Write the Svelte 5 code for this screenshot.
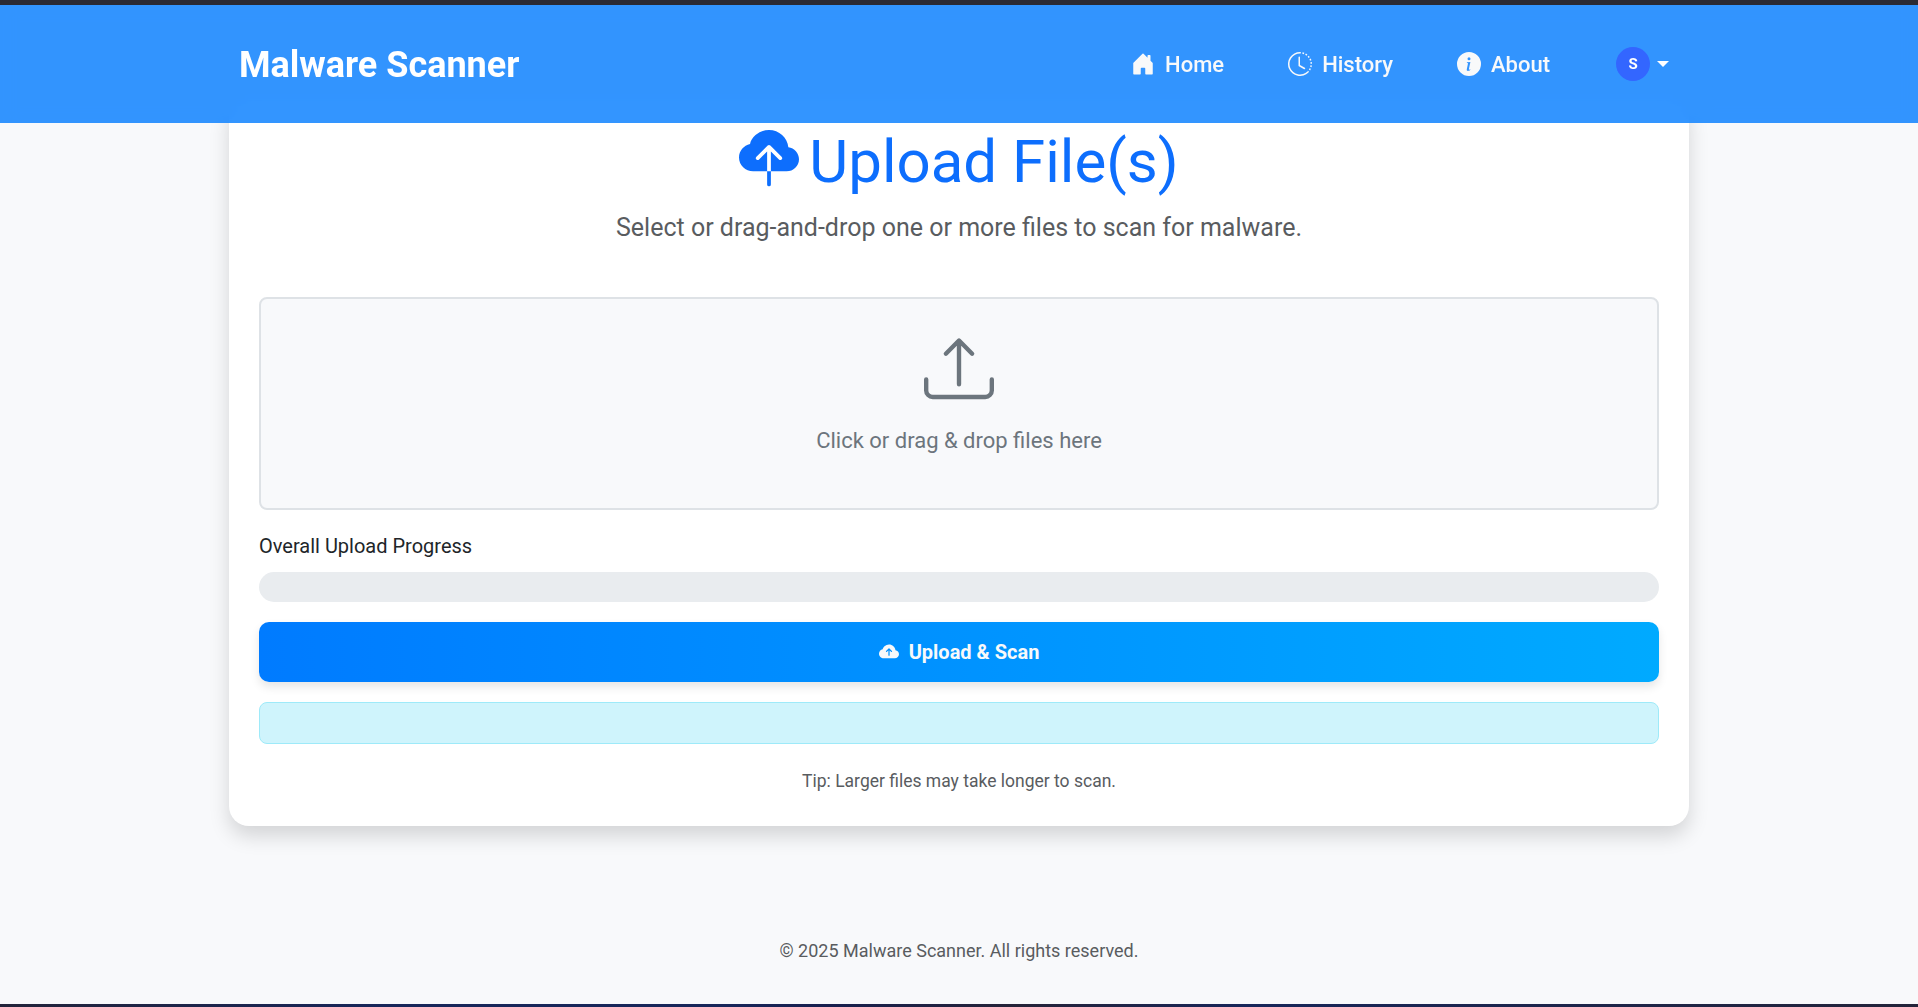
<script>
  const nav = [
    {
      label: 'Home',
      paths: ['M6.5 14.5v-3.505c0-.245.25-.495.5-.495h2c.25 0 .5.25.5.5v3.5a.5.5 0 0 0 .5.5h4a.5.5 0 0 0 .5-.5v-7a.5.5 0 0 0-.146-.354L13 5.793V2.5a.5.5 0 0 0-.5-.5h-1a.5.5 0 0 0-.5.5v1.293L8.354 1.146a.5.5 0 0 0-.708 0l-6 6A.5.5 0 0 0 1.5 7.5v7a.5.5 0 0 0 .5.5h4a.5.5 0 0 0 .5-.5']
    },
    {
      label: 'History',
      paths: [
        'M8.515 1.019A7 7 0 0 0 8 1V0a8 8 0 0 1 .589.022zm2.004.45a7 7 0 0 0-.985-.299l.219-.976q.576.129 1.126.342zm1.37.71a7 7 0 0 0-.439-.27l.493-.87a8 8 0 0 1 .979.654l-.615.789a7 7 0 0 0-.418-.302zm1.834 1.79a7 7 0 0 0-.653-.796l.724-.69q.406.429.747.91zm.744 1.352a7 7 0 0 0-.214-.468l.893-.45a8 8 0 0 1 .45 1.088l-.95.313a7 7 0 0 0-.179-.483m.53 2.507a7 7 0 0 0-.1-1.025l.985-.17q.1.58.116 1.17zm-.131 1.538q.05-.254.081-.51l.993.123a8 8 0 0 1-.23 1.155l-.964-.267q.069-.247.12-.501m-.952 2.379q.276-.436.486-.908l.914.405q-.24.54-.555 1.038zm-.964 1.205q.183-.183.35-.378l.758.653a8 8 0 0 1-.401.432z',
        'M8 1a7 7 0 1 0 4.95 11.95l.707.707A8.001 8.001 0 1 1 8 0z',
        'M7.5 3a.5.5 0 0 1 .5.5v5.21l3.248 1.856a.5.5 0 0 1-.496.868l-3.5-2A.5.5 0 0 1 7 9V3.5a.5.5 0 0 1 .5-.5'
      ]
    },
    {
      label: 'About',
      paths: ['M8 16A8 8 0 1 0 8 0a8 8 0 0 0 0 16m.93-9.412-1 4.705c-.07.34.029.533.304.533.194 0 .487-.07.686-.246l-.088.416c-.287.346-.92.598-1.465.598-.703 0-1.002-.422-.808-1.319l.738-3.468c.064-.293.006-.399-.287-.47l-.451-.081.082-.381 2.29-.287zM8 5.5a1 1 0 1 1 0-2 1 1 0 0 1 0 2']
    }
  ];
</script>

<div class="page">
  <div class="edge top"></div>
  <header>
    <div class="bar">
      <a class="brand" href="#home">Malware Scanner</a>
      <nav>
        {#each nav as item}
          <a class="link" href="#{item.label.toLowerCase()}">
            <svg class="icon" viewBox="0 0 16 16">
              {#each item.paths as d}<path {d} />{/each}
            </svg>
            <span>{item.label}</span>
          </a>
        {/each}
        <button class="account" aria-label="Account menu">
          <span class="avatar">S</span>
          <span class="caret"></span>
        </button>
      </nav>
    </div>
  </header>

  <main>
    <h1>
      <svg class="icon" viewBox="0 0 16 16"><path d="M8 0a5.53 5.53 0 0 0-3.594 1.342c-.766.66-1.321 1.52-1.464 2.383C1.266 4.095 0 5.555 0 7.318 0 9.366 1.708 11 3.781 11H7.5V5.707L5.354 7.854a.5.5 0 1 1-.708-.708l3-3a.5.5 0 0 1 .708 0l3 3a.5.5 0 0 1-.708.708L8.5 5.707V11h4.188C14.502 11 16 9.57 16 7.773c0-1.636-1.242-2.969-2.834-3.194C12.923 1.999 10.69 0 8 0m-.5 14.5V11h1v3.5a.5.5 0 0 1-1 0" /></svg>
      <span>Upload File(s)</span>
    </h1>
    <p class="lead">Select or drag-and-drop one or more files to scan for malware.</p>

    <div class="drop">
      <svg class="icon" viewBox="0 0 16 16">
        <path d="M.5 9.9a.5.5 0 0 1 .5.5v2.5a1 1 0 0 0 1 1h12a1 1 0 0 0 1-1v-2.5a.5.5 0 0 1 1 0v2.5a2 2 0 0 1-2 2H2a2 2 0 0 1-2-2v-2.5a.5.5 0 0 1 .5-.5" />
        <path d="M7.646 1.146a.5.5 0 0 1 .708 0l3 3a.5.5 0 0 1-.708.708L8.5 2.707V11.5a.5.5 0 0 1-1 0V2.707L5.354 4.854a.5.5 0 1 1-.708-.708z" />
      </svg>
      <p>Click or drag &amp; drop files here</p>
    </div>

    <div class="label">Overall Upload Progress</div>
    <div class="progress"></div>
    <button class="submit">
      <svg class="icon" viewBox="0 0 16 16"><path d="M8 2a5.53 5.53 0 0 0-3.594 1.342c-.766.66-1.321 1.52-1.464 2.383C1.266 6.095 0 7.555 0 9.318 0 11.366 1.708 13 3.781 13h8.906C14.502 13 16 11.57 16 9.773c0-1.636-1.242-2.969-2.834-3.194C12.923 3.999 10.69 2 8 2m2.354 5.146a.5.5 0 0 1-.708.708L8.5 6.707V10.5a.5.5 0 0 1-1 0V6.707L6.354 7.854a.5.5 0 1 1-.708-.708l2-2a.5.5 0 0 1 .708 0z" /></svg>
      <span>Upload &amp; Scan</span>
    </button>
    <div class="alert"></div>
    <p class="tip">Tip: Larger files may take longer to scan.</p>
  </main>

  <footer>© 2025 Malware Scanner. All rights reserved.</footer>
  <div class="edge bottom"></div>
</div>

<style>
  :global(body) {
    margin: 0;
    background: #f8f9fa;
    overflow: hidden;
  }
  .page {
    display: flex;
    flex-direction: column;
    height: 1007px;
    box-sizing: border-box;
    background: #f8f9fb;
    color: #212529;
    font: 400 20px/30px Roboto, sans-serif;
  }
  .page * {
    box-sizing: border-box;
  }
  p, h1 {
    margin: 0;
  }
  a {
    color: inherit;
    text-decoration: none;
  }
  button {
    border: 0;
    padding: 0;
    background: none;
    color: inherit;
    font: inherit;
  }
  .icon {
    display: block;
    flex: none;
    width: 1em;
    height: 1em;
    fill: currentColor;
  }
  .edge {
    flex: none;
    background: #2b2a33;
  }
  .top {
    height: 5px;
  }
  .bottom {
    height: 3px;
    margin-top: auto;
    background: linear-gradient(90deg, #23243a, #17265a 20%, #17265a 38%, #17204f 43%, #252338 53%, #17265a 65%, #23243a);
  }
  header {
    position: relative;
    z-index: 1;
    flex: none;
    height: 118px;
    background: rgba(0, 123, 255, 0.8);
    backdrop-filter: blur(10px);
  }
  .bar {
    display: flex;
    justify-content: space-between;
    align-items: center;
    width: 1440px;
    height: 100%;
    margin: 0 auto;
    color: #fff;
  }
  .brand {
    padding-top: 2px;
    font-size: 36px;
    font-weight: 700;
  }
  nav {
    display: flex;
    align-items: center;
    gap: 64px;
    color: #f8f9fa;
    font-size: 22px;
    font-weight: 500;
  }
  .link {
    display: flex;
    align-items: center;
    gap: 10px;
  }
  .link span {
    padding-top: 2px;
  }
  .link .icon {
    width: 24px;
    height: 24px;
  }
  .account {
    display: flex;
    align-items: center;
    gap: 7px;
    margin: 0 10px 0 2px;
  }
  .avatar {
    width: 34px;
    height: 34px;
    border-radius: 50%;
    background: #3366ff;
    color: #fff;
    font-size: 15px;
    font-weight: 700;
    line-height: 34px;
    text-align: center;
  }
  .caret {
    border: 6px solid transparent;
    border-top-color: #fff;
    border-bottom: 0;
  }
  main {
    flex: none;
    width: 1460px;
    height: 728px;
    margin: -25px auto 0;
    padding: 26px 30px 0;
    border-radius: 20px;
    background: #fff;
    box-shadow: 0 10px 20px rgba(0, 0, 0, 0.15);
  }
  h1 {
    display: flex;
    justify-content: center;
    gap: 10px;
    height: 72px;
    color: #0d6efd;
    font-size: 60px;
    font-weight: 400;
    line-height: 72px;
  }
  h1 .icon {
    margin-top: 6px;
  }
  h1 span {
    padding-top: 2px;
  }
  .lead {
    margin-top: 13px;
    color: #595c5f;
    font-size: 25px;
    line-height: 38px;
    text-align: center;
  }
  .drop {
    display: flex;
    flex-direction: column;
    align-items: center;
    gap: 20px;
    height: 213px;
    margin-top: 50px;
    padding-top: 35px;
    border: 2px solid #dee2e6;
    border-radius: 8px;
    background: #f8f9fb;
    color: #6c757d;
    font-size: 22px;
    line-height: 33px;
  }
  .drop .icon {
    width: 70px;
    height: 70px;
  }
  .label {
    margin-top: 21px;
  }
  .progress {
    height: 30px;
    margin-top: 11px;
    border-radius: 15px;
    background: #e9ecef;
  }
  .submit {
    display: flex;
    justify-content: center;
    align-items: center;
    gap: 10px;
    width: 100%;
    height: 60px;
    margin-top: 20px;
    border-radius: 10px;
    background: linear-gradient(90deg, #007bff, #00aaff);
    box-shadow: 0 5px 10px rgba(0, 0, 0, 0.1);
    color: #f8f9fa;
    font-weight: 700;
  }
  .alert {
    height: 42px;
    margin-top: 20px;
    border: 1px solid #9eeaf9;
    border-radius: 8px;
    background: #cff4fc;
  }
  .tip {
    margin-top: 22px;
    color: #595c5f;
    font-size: 17.5px;
    text-align: center;
  }
  footer {
    margin-top: 110px;
    color: #595c5f;
    font-size: 18px;
    text-align: center;
  }
</style>
